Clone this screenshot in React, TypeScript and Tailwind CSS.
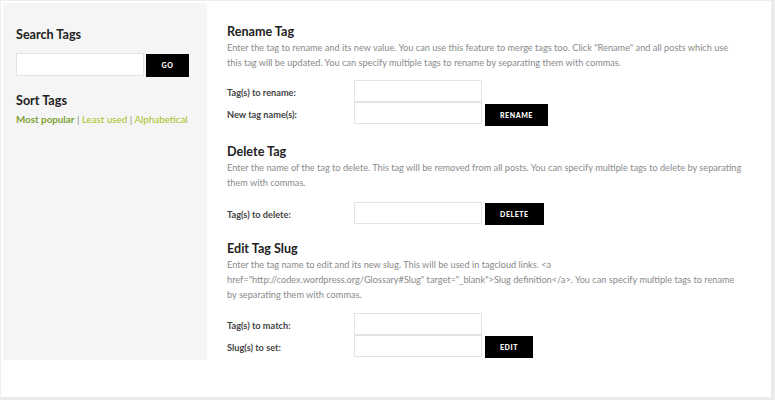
import React from "react";

const font = { fontFamily: "Lato, 'Open Sans', sans-serif" };

function Field({ label, button, shift = "mt-[2px]" }: { label: string; button?: string; shift?: string }) {
  return (
    <div className="flex items-start">
      <div className="w-[127px] h-[22px] pt-[4px] flex items-center text-[9.2px] font-bold text-[#444]">{label}</div>
      <input className="w-[128px] h-[22px] border border-[#e3e3e3] bg-white outline-none" />
      {button && (
        <button
          className={`ml-[3px] ${shift} h-[22px] px-[15px] bg-black text-white text-[7px] font-black tracking-[0.08em] uppercase`}
        >
          {button}
        </button>
      )}
    </div>
  );
}

export default function App() {
  return (
    <div className="min-h-screen bg-[#ebebeb]" style={font}>
      <div className="w-[771px] h-[397px] bg-white border-t border-l border-[#eeeeee] pt-[2px] pl-[2px]">
        <div className="flex items-stretch">
          <aside className="w-[204px] shrink-0 bg-[#f5f5f5] pl-[13px] pt-[24px]">
            <h3 className="text-[12.6px] leading-[16px] font-bold text-[#222]">Search Tags</h3>
            <div className="flex items-start mt-[10px]">
              <input className="w-[128px] h-[23px] border border-[#e3e3e3] bg-white outline-none" />
              <button className="ml-[2px] mt-[1px] w-[43px] h-[23px] bg-black text-white text-[7px] font-black tracking-[0.08em]">
                GO
              </button>
            </div>
            <h3 className="mt-[16px] text-[12.6px] leading-[16px] font-bold text-[#222]">Sort Tags</h3>
            <p className="mt-[3px] text-[9.8px] leading-[14px] text-[#888]">
              <a className="font-bold text-[#7da233]">Most popular</a> |{" "}
              <a className="text-[#a6c21c]">Least used</a> |{" "}
              <a className="text-[#a6c21c]">Alphabetical</a>
            </p>
          </aside>

          <main className="w-[535px] ml-[20px] pt-[21px] pb-[2px]">
            <h3 className="text-[12.6px] leading-[16px] font-bold text-[#222]">Rename Tag</h3>
            <p className="text-[9.2px] leading-[15px] text-[#8a8a8a] whitespace-nowrap">
              Enter the tag to rename and its new value. You can use this feature to merge tags too. Click "Rename" and all
              posts which use
              <br />
              this tag will be updated. You can specify multiple tags to rename by separating them with commas.
            </p>
            <div className="mt-[10px]">
              <Field label="Tag(s) to rename:" />
              <Field label="New tag name(s):" button="Rename" />
            </div>

            <h3 className="mt-[18px] text-[12.6px] leading-[16px] font-bold text-[#222]">Delete Tag</h3>
            <p className="text-[9.2px] leading-[15px] text-[#8a8a8a] whitespace-nowrap">
              Enter the name of the tag to delete. This tag will be removed from all posts. You can specify multiple tags to
              delete by separating
              <br />
              them with commas.
            </p>
            <div className="mt-[12px]">
              <Field label="Tag(s) to delete:" button="Delete" shift="mt-[1px]" />
            </div>

            <h3 className="mt-[16px] text-[12.6px] leading-[16px] font-bold text-[#222]">Edit Tag Slug</h3>
            <p className="text-[9.2px] leading-[15px] text-[#8a8a8a] whitespace-nowrap">
              Enter the tag name to edit and its new slug. This will be used in tagcloud links. &lt;a
              <br />
              href="http://codex.wordpress.org/Glossary#Slug" target="_blank"&gt;Slug definition&lt;/a&gt;. You can specify
              multiple tags to rename
              <br />
              by separating them with commas.
            </p>
            <div className="mt-[11px]">
              <Field label="Tag(s) to match:" />
              <Field label="Slug(s) to set:" button="Edit" shift="mt-[1px]" />
            </div>
          </main>
        </div>
      </div>
    </div>
  );
}
